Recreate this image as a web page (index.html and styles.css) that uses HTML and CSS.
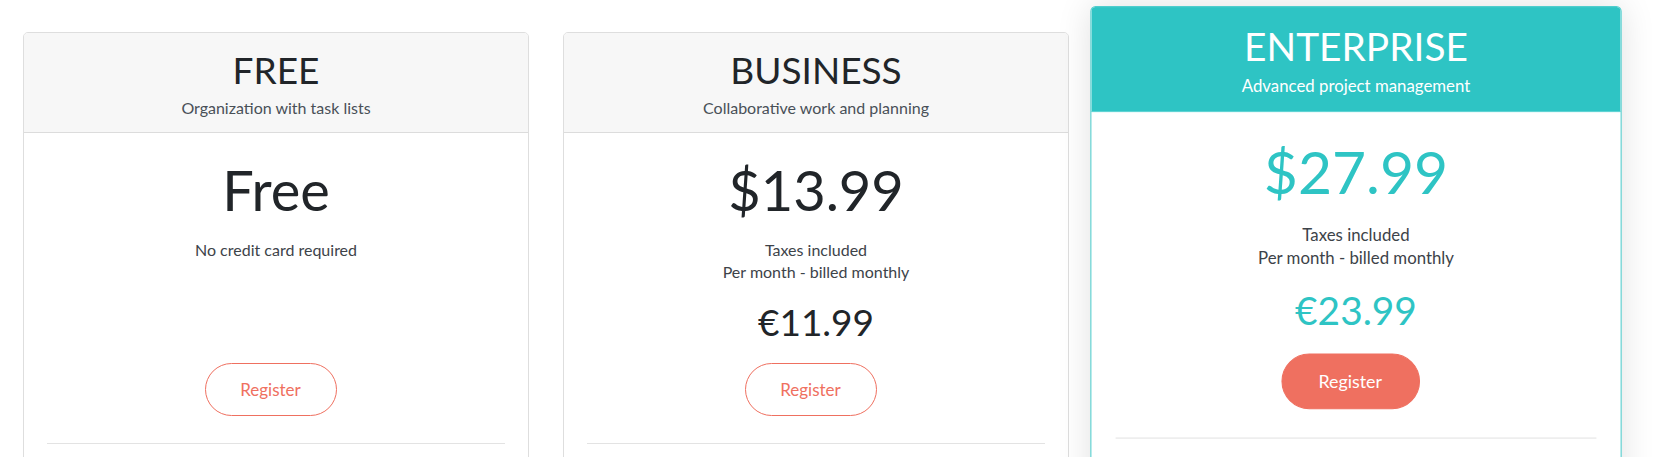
FILE: index.html
```html
<!DOCTYPE html>
<html lang="en">
<head>
<meta charset="utf-8">
<title>Pricing</title>
<link rel="stylesheet" href="styles.css">
</head>
<body>
<main class="plans">
  <section class="plan">
    <header class="plan-header">
      <h2 class="plan-name">FREE</h2>
      <p class="plan-tagline">Organization with task lists</p>
    </header>
    <div class="plan-body">
      <div class="pricing">
        <div class="amount">Free</div>
        <p class="note">No credit card required</p>
      </div>
      <a class="btn btn-outline" href="#">Register</a>
      <hr class="divider">
    </div>
  </section>

  <section class="plan">
    <header class="plan-header">
      <h2 class="plan-name">BUSINESS</h2>
      <p class="plan-tagline">Collaborative work and planning</p>
    </header>
    <div class="plan-body">
      <div class="pricing">
        <div class="amount">$13.99</div>
        <p class="note">Taxes included<br>Per month - billed monthly</p>
        <div class="alt-amount">€11.99</div>
      </div>
      <a class="btn btn-outline" href="#">Register</a>
      <hr class="divider">
    </div>
  </section>

  <section class="plan plan-featured">
    <header class="plan-header">
      <h2 class="plan-name">ENTERPRISE</h2>
      <p class="plan-tagline">Advanced project management</p>
    </header>
    <div class="plan-body">
      <div class="pricing">
        <div class="amount">$27.99</div>
        <p class="note">Taxes included<br>Per month - billed monthly</p>
        <div class="alt-amount">€23.99</div>
      </div>
      <a class="btn btn-solid" href="#">Register</a>
      <hr class="divider">
    </div>
  </section>
</main>
</body>
</html>
```
FILE: styles.css
```css
html, body {
  margin: 0;
  padding: 0;
  overflow: hidden;
  background: #ffffff;
}

body {
  font-family: "Lato", "Open Sans", sans-serif;
  color: #212529;
}

.plans {
  display: grid;
  grid-template-columns: repeat(3, 506px);
  column-gap: 34px;
  align-items: start;
  padding: 32px 0 0 23px;
}

.plan {
  min-height: 1040px;
  box-sizing: border-box;
  border: 1px solid #dedede;
  border-radius: 5px;
  background: #ffffff;
  text-align: center;
  overflow: hidden;
}

.plan-header {
  height: 100px;
  padding-top: 15px;
  box-sizing: border-box;
  background: #f7f7f7;
  border-bottom: 1px solid #dcdcdc;
}

.plan-name {
  margin: 0;
  font-size: 37px;
  font-weight: 400;
  line-height: 43px;
  color: #212529;
}

.plan-tagline {
  margin: 6px 0 0;
  font-size: 16px;
  line-height: 22px;
  color: #495057;
}

.plan-body {
  padding: 24px 23px 0;
}

.pricing {
  height: 206px;
  display: flex;
  flex-direction: column;
  align-items: center;
}

.amount {
  font-size: 56px;
  line-height: 66px;
  color: #212529;
}

.note {
  margin: 16px 0 0;
  font-size: 16px;
  line-height: 22px;
  color: #3d4349;
}

.alt-amount {
  margin-top: 18px;
  font-size: 37px;
  line-height: 42px;
  color: #212529;
}

.btn {
  display: inline-flex;
  align-items: center;
  justify-content: center;
  box-sizing: border-box;
  width: 132px;
  height: 53px;
  margin-right: 11px;
  border-radius: 27px;
  font-size: 17px;
  text-decoration: none;
}

.btn-outline {
  border: 1px solid #ef7060;
  color: #ef7060;
  background: #ffffff;
}

.btn-solid {
  border: 1px solid #ef7060;
  color: #ffffff;
  background: #ef7060;
}

.divider {
  margin: 27px 0 0;
  border: 0;
  border-top: 1px solid #e3e3e3;
}

.plan-featured {
  transform: scale(1.05);
  border-color: #4fcdcd;
  box-shadow: 0 0 32px rgba(0, 0, 0, 0.12);
}

.plan-featured .plan-header {
  background: #2ec4c4;
  border-bottom-color: #5fd3d3;
}

.plan-featured .plan-name,
.plan-featured .plan-tagline {
  color: #ffffff;
}

.plan-featured .amount,
.plan-featured .alt-amount {
  color: #2ec4c4;
}
```
